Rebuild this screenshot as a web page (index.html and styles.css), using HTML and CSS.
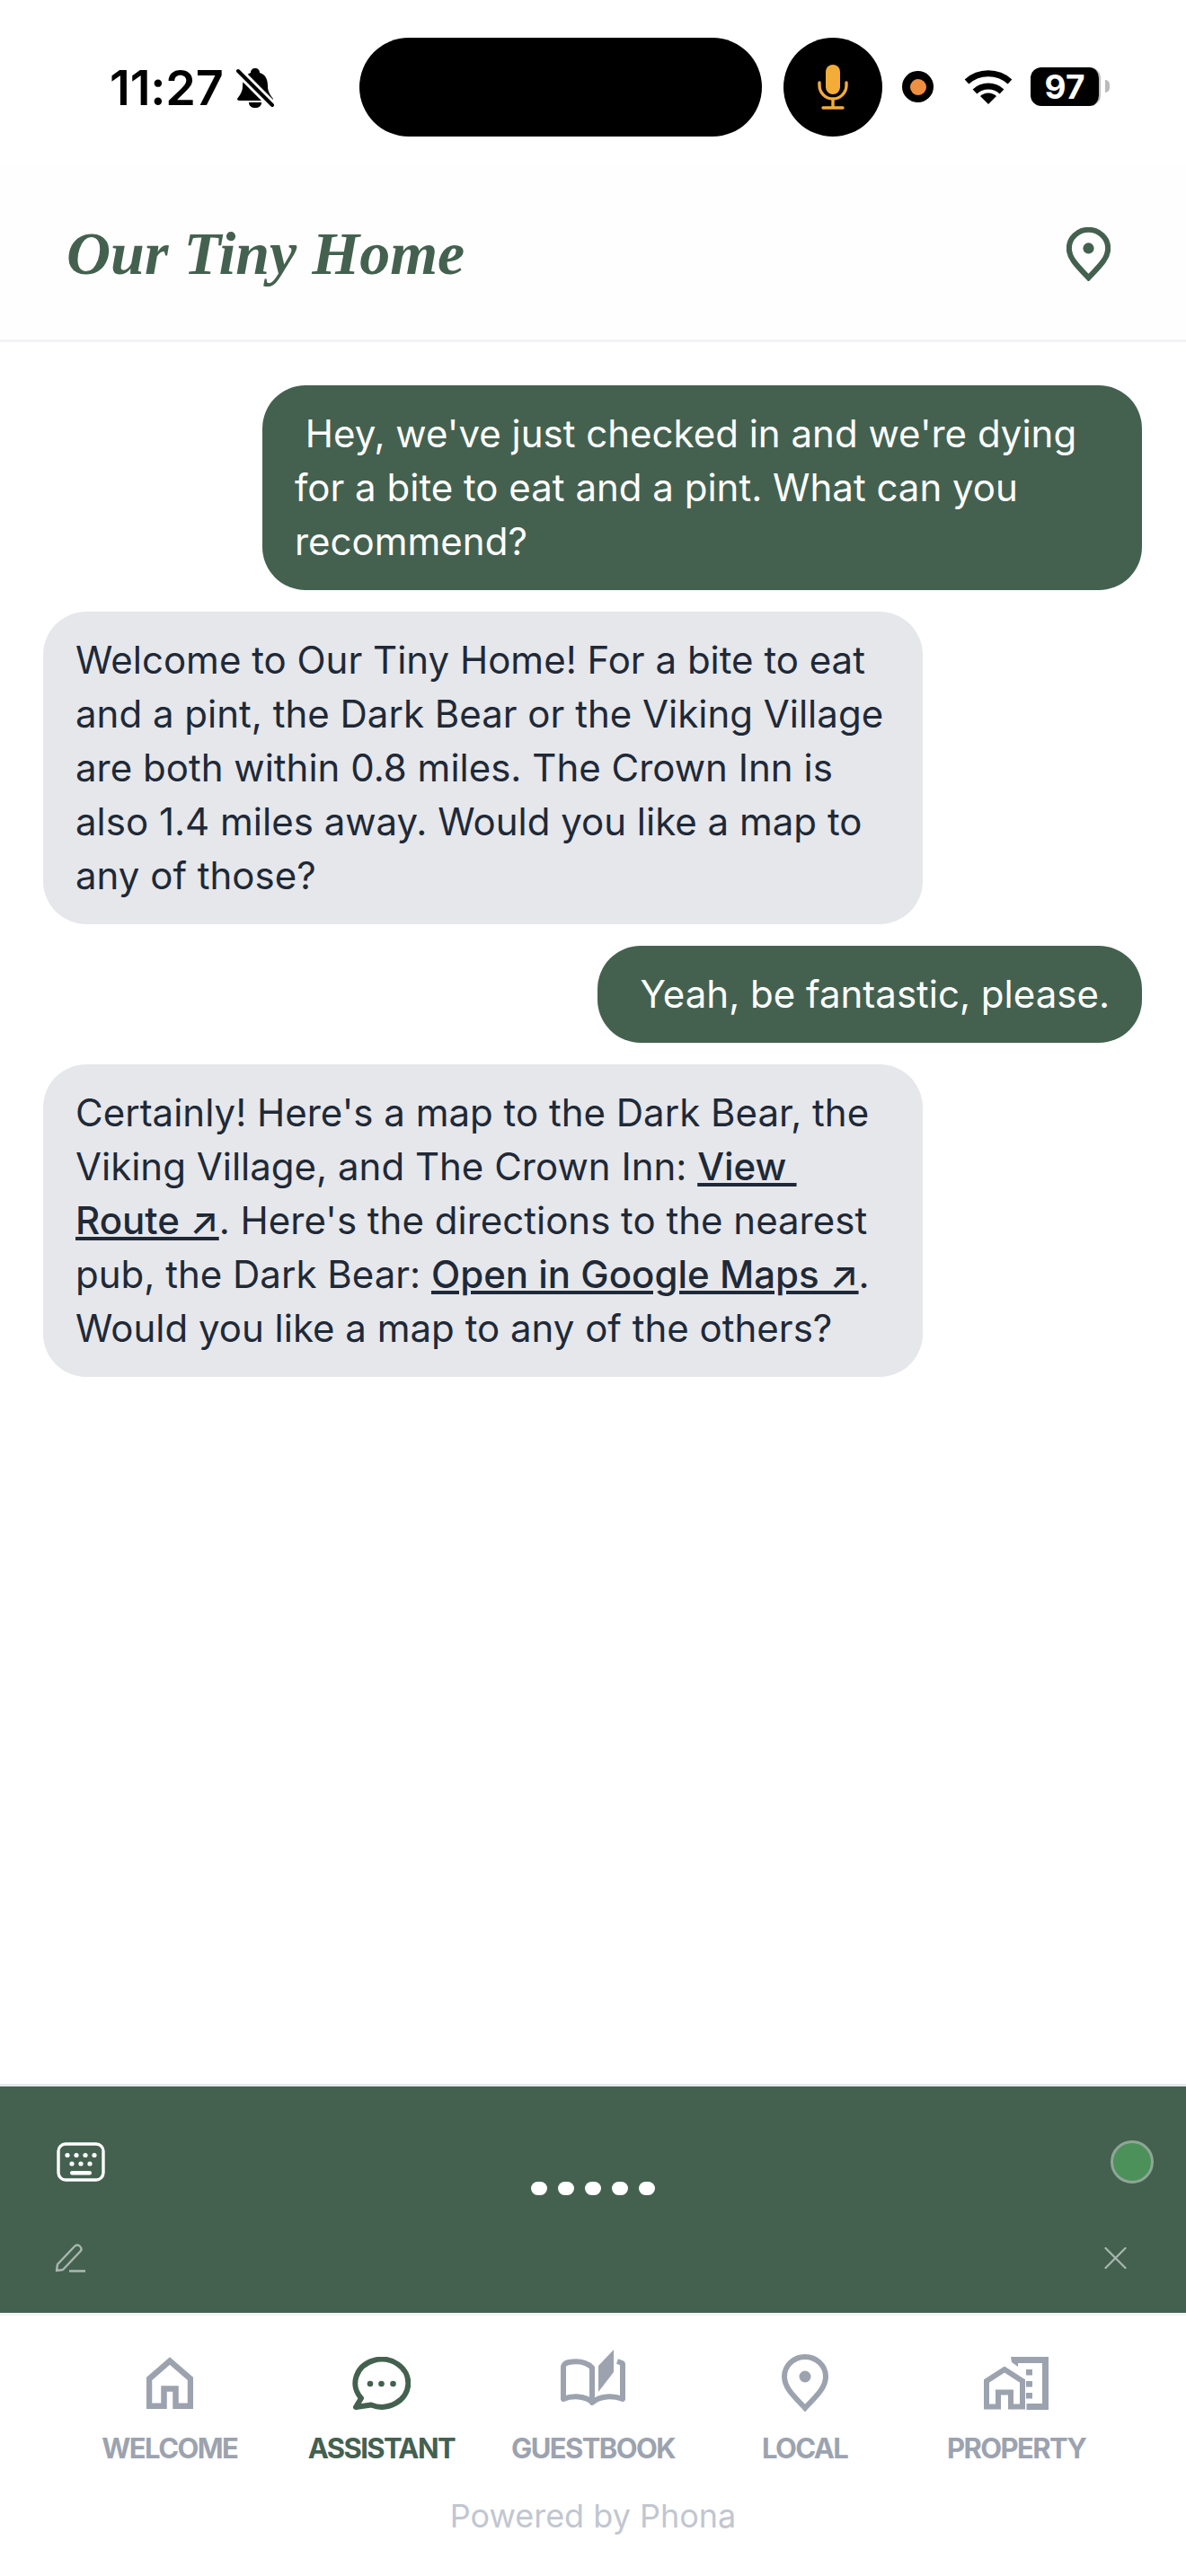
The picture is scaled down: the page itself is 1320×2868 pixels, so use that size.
FILE: index.html
```html
<!DOCTYPE html>
<html lang="en">
<head>
    <meta charset="UTF-8">
    <meta name="viewport" content="width=device-width, initial-scale=1.0">
    <title>Our Tiny Home</title>
    <link rel="stylesheet" href="styles.css">
</head>
<body>
    <div class="status-bar">
        <div class="status-left">
            <span class="clock">11:27</span>
            <svg class="bell" viewBox="0 0 42 45">
                <path d="M21 1C24 1 26 3 26 6C33 8 35 14 35 21C35 27 38 31 41 35C41 37 39 37 37 37H5C3 37 1 37 1 35C4 31 7 27 7 21C7 14 10 8 16 6C16 3 18 1 21 1Z"/>
                <path d="M14 39H28C28 43 25 45 21 45C17 45 14 43 14 39Z"/>
                <path d="M1 3L41 43" stroke="#fff" stroke-width="10"/>
                <path d="M2 4L40 42" stroke="#000" stroke-width="4" stroke-linecap="round"/>
            </svg>
        </div>
        <div class="island"></div>
        <div class="mic-bubble">
            <svg class="mic" viewBox="0 0 34 50">
                <rect x="9" y="0" width="16" height="33" rx="8" fill="#f4ac38"/>
                <path d="M2 20V23A15 15 0 0 0 32 23V20M17 38V47M6 48H28" fill="none" stroke="#f4ac38" stroke-width="3.4" stroke-linecap="round"/>
            </svg>
        </div>
        <div class="rec-dot"><span></span></div>
        <svg class="wifi" viewBox="0 0 54 40">
            <path d="M3 15A36 36 0 0 1 51 15M12 26A22 22 0 0 1 42 26" fill="none" stroke="#000" stroke-width="7"/>
            <path d="M27 40L18 31A13 13 0 0 1 36 31Z"/>
        </svg>
        <div class="battery">97</div>
        <div class="battery-cap"></div>
    </div>

    <header class="site-header">
        <h1 class="site-title">Our Tiny Home</h1>
        <svg class="header-pin" viewBox="0 0 52 64" preserveAspectRatio="none">
            <path d="M26 60C15 48 3 38 3 25A23 22 0 0 1 49 25C49 38 37 48 26 60Z" fill="none" stroke="currentColor" stroke-width="6.5"/>
            <ellipse cx="26" cy="25" rx="6.5" ry="6.5" fill="currentColor"/>
        </svg>
    </header>

    <main class="chat">
        <div class="bubble bubble-user">&nbsp;Hey, we've just checked in and we're dying for a bite to eat and a pint. What can you recommend?</div>
        <div class="bubble bubble-bot">Welcome to Our Tiny Home! For a bite to eat and a pint, the Dark Bear or the Viking Village are both within 0.8 miles. The Crown Inn is also 1.4 miles away. Would you like a map to any of those?</div>
        <div class="bubble bubble-user">&nbsp;Yeah, be fantastic, please.</div>
        <div class="bubble bubble-bot">Certainly! Here's a map to the Dark Bear, the Viking Village, and The Crown Inn: <a class="bubble-link" href="#">View&nbsp;<wbr>Route ↗</a>. Here's the directions to the nearest pub, the Dark Bear: <a class="bubble-link" href="#">Open in Google Maps ↗</a>. Would you like a map to any of the others?</div>
    </main>

    <section class="voice-panel">
        <div class="voice-top">
            <svg class="keyboard" viewBox="0 0 54 44">
                <rect x="2" y="2" width="50" height="40" rx="8" fill="none" stroke="#fff" stroke-width="3.4"/>
                <g fill="#fff">
                    <circle cx="12" cy="14.5" r="2.6"/><circle cx="22" cy="14.5" r="2.6"/><circle cx="32" cy="14.5" r="2.6"/><circle cx="42" cy="14.5" r="2.6"/>
                    <circle cx="17" cy="24" r="2.6"/><circle cx="27" cy="24" r="2.6"/><circle cx="37" cy="24" r="2.6"/>
                    <rect x="15" y="32" width="24" height="4.5" rx="2.2"/>
                </g>
            </svg>
            <div class="voice-dots"><span></span><span></span><span></span><span></span><span></span></div>
            <div class="voice-status"></div>
        </div>
        <div class="voice-bottom">
            <svg class="pen" viewBox="0 0 34 32">
                <path d="M2 30L3 23L22 3C24 1 26 1 28 3C30 5 30 7 28 9L9 29Z" fill="none" stroke="#a9b7ae" stroke-width="2.4" stroke-linejoin="round"/>
                <path d="M16 30.5H34" stroke="#a9b7ae" stroke-width="2.6"/>
            </svg>
            <svg class="close" viewBox="0 0 25 24">
                <path d="M1.5 1L23.5 23M23.5 1L1.5 23" stroke="#a9b7ae" stroke-width="2.2" stroke-linecap="round"/>
            </svg>
        </div>
    </section>

    <nav class="tabs">
        <a class="tab" href="#">
            <span class="tab-icon">
                <svg width="52" height="58" viewBox="0 0 52 58">
                    <path d="M3 54.8V24.5L26 4.5L49 24.5V54.8H32.5V35.5H19.5V54.8Z" fill="none" stroke="currentColor" stroke-width="6.5"/>
                </svg>
            </span>
            <span class="tab-label">WELCOME</span>
        </a>
        <a class="tab tab-active" href="#">
            <span class="tab-icon">
                <svg width="65" height="59" viewBox="0 0 65 59">
                    <path d="M21 53.5A29.5 26.5 0 1 0 10 46L4 56Z" fill="none" stroke="currentColor" stroke-width="6" stroke-linejoin="round"/>
                    <circle cx="20" cy="30" r="3.3" fill="currentColor"/><circle cx="32.5" cy="30" r="3.3" fill="currentColor"/><circle cx="45.5" cy="30" r="3.3" fill="currentColor"/>
                </svg>
            </span>
            <span class="tab-label">ASSISTANT</span>
        </a>
        <a class="tab" href="#">
            <span class="tab-icon">
                <svg class="book" width="72" height="64" viewBox="0 0 72 64">
                    <path d="M36 59C27 51 13 51 3 55V20C3 16 5 15 9 14C20 12 29 14 35 20V59C44 51 58 51 69 55V16C69 15 66 14 63 13" fill="none" stroke="currentColor" stroke-width="6" stroke-linejoin="round"/>
                    <path d="M59 0V25L42 47V18Z" fill="currentColor"/>
                </svg>
            </span>
            <span class="tab-label">GUESTBOOK</span>
        </a>
        <a class="tab" href="#">
            <span class="tab-icon">
                <svg width="52" height="64" viewBox="0 0 52 64">
                    <path d="M26 60C15 48 3 38 3 25A23 22 0 0 1 49 25C49 38 37 48 26 60Z" fill="none" stroke="currentColor" stroke-width="6"/>
                    <circle cx="26" cy="25" r="6.5" fill="currentColor"/>
                </svg>
            </span>
            <span class="tab-label">LOCAL</span>
        </a>
        <a class="tab" href="#">
            <span class="tab-icon">
                <svg width="72" height="59" viewBox="0 0 72 59">
                    <path d="M3 55.5V27L23 14L43 27V55.5H30V39.5H16V55.5Z" fill="none" stroke="currentColor" stroke-width="6"/>
                    <path d="M30 0H72V59H47.5V52H65V7H38V11L31 6Z" fill="currentColor"/>
                    <path d="M47 14H54V20.5H47ZM47 27H54V33.5H47ZM47 40H54V46.5H47Z" fill="currentColor"/>
                </svg>
            </span>
            <span class="tab-label">PROPERTY</span>
        </a>
    </nav>
    <div class="powered">Powered by Phona</div>
</body>
</html>
```

FILE: styles.css
```css
* {
    box-sizing: border-box;
}
body {
    margin: 0;
    padding: 0;
    height: 100vh;
    background: #fff;
    font-family: "Inter", "Liberation Sans", sans-serif;
    display: flex;
    flex-direction: column;
    overflow: hidden;
}

/* status bar */
.status-bar {
    height: 185px;
    padding-top: 42px;
    display: flex;
    align-items: flex-start;
}
.status-left {
    width: 400px;
    height: 110px;
    padding-left: 122px;
    display: flex;
    align-items: center;
    gap: 14px;
}
.clock {
    font-size: 54px;
    font-weight: 600;
    letter-spacing: -0.2px;
    color: #000;
}
.bell {
    width: 42px;
    height: 45px;
}
.island {
    width: 448px;
    height: 110px;
    border-radius: 55px;
    background: #000;
}
.mic-bubble {
    width: 110px;
    height: 110px;
    margin-left: 24px;
    border-radius: 50%;
    background: #000;
    display: flex;
    align-items: center;
    justify-content: center;
}
.mic {
    width: 34px;
    height: 50px;
}
.rec-dot {
    width: 35px;
    height: 35px;
    margin: 37px 0 0 22px;
    border-radius: 50%;
    background: #000;
    display: flex;
    align-items: center;
    justify-content: center;
}
.rec-dot span {
    width: 18px;
    height: 18px;
    border-radius: 50%;
    background: #ee9040;
}
.wifi {
    width: 54px;
    height: 40px;
    margin: 34px 0 0 34px;
}
.battery {
    width: 78px;
    height: 43px;
    margin: 33px 0 0 20px;
    border-radius: 12px;
    border-right: 2px solid #bbb;
    background: #000;
    color: #fff;
    font-size: 37px;
    font-weight: 700;
    line-height: 43px;
    text-align: center;
}
.battery-cap {
    width: 5px;
    height: 14px;
    margin: 47px 0 0 5px;
    border-radius: 0 7px 7px 0;
    background: #bbb;
}

/* header */
.site-header {
    height: 196px;
    padding: 2px 84px 0 74px;
    background: #fefefe;
    border-bottom: 3px solid #f3f4f6;
    display: flex;
    align-items: center;
    justify-content: space-between;
}
.site-title {
    margin: 0;
    font-family: "Liberation Serif", serif;
    font-size: 68px;
    font-style: italic;
    font-weight: 700;
    color: #446150;
}
.header-pin {
    width: 49px;
    height: 60px;
    color: #446150;
}

/* chat */
.chat {
    flex: 1;
    padding: 48px 49px 0 48px;
    display: flex;
    flex-direction: column;
    gap: 24px;
}
.bubble {
    max-width: 979px;
    padding: 24px 36px;
    border-radius: 48px;
    font-size: 42px;
    line-height: 60px;
}
.bubble-user {
    align-self: flex-end;
    background: #446150;
    color: #fff;
}
.bubble-bot {
    align-self: flex-start;
    background: #e5e7eb;
    color: #1f2937;
}
.bubble-link {
    color: #1f2937;
    font-weight: 500;
    text-decoration: underline;
}

/* voice panel */
.voice-panel {
    height: 258px;
    padding: 62px 36px 0;
    background: #446150;
    border-top: 3px solid #e5e7eb;
    border-bottom: 3px solid #f3f4f6;
}
.voice-top {
    display: grid;
    grid-template-columns: 1fr auto 1fr;
    align-items: start;
}
.keyboard {
    width: 54px;
    height: 44px;
    margin-left: 27px;
}
.voice-dots {
    margin-top: 44px;
    display: flex;
    gap: 12px;
}
.voice-dots span {
    width: 18px;
    height: 15px;
    border-radius: 8px;
    background: #fff;
}
.voice-status {
    width: 48px;
    height: 48px;
    margin-top: -2px;
    justify-self: end;
    border-radius: 50%;
    background: #4c905a;
    border: 3px solid #8fa596;
}
.voice-bottom {
    margin-top: 54px;
    padding: 0 30px 0 25px;
    display: flex;
    align-items: center;
    justify-content: space-between;
}
.pen {
    width: 34px;
    height: 32px;
}
.close {
    width: 25px;
    height: 24px;
}

/* tabs */
.tabs {
    padding: 40px 71px 0;
    display: grid;
    grid-template-columns: repeat(5, 1fr);
}
.tab {
    display: flex;
    flex-direction: column;
    align-items: center;
    color: #9ca3af;
    text-decoration: none;
}
.tab-active {
    color: #446150;
}
.tab-icon {
    height: 70px;
    display: flex;
    align-items: center;
}
.book {
    margin-bottom: 10px;
}
.tab-label {
    margin-top: 19px;
    font-size: 31px;
    font-weight: 700;
    letter-spacing: -1.6px;
}
.powered {
    height: 124px;
    padding-top: 35px;
    color: #c1c6d0;
    font-size: 36px;
    text-align: center;
}
```
